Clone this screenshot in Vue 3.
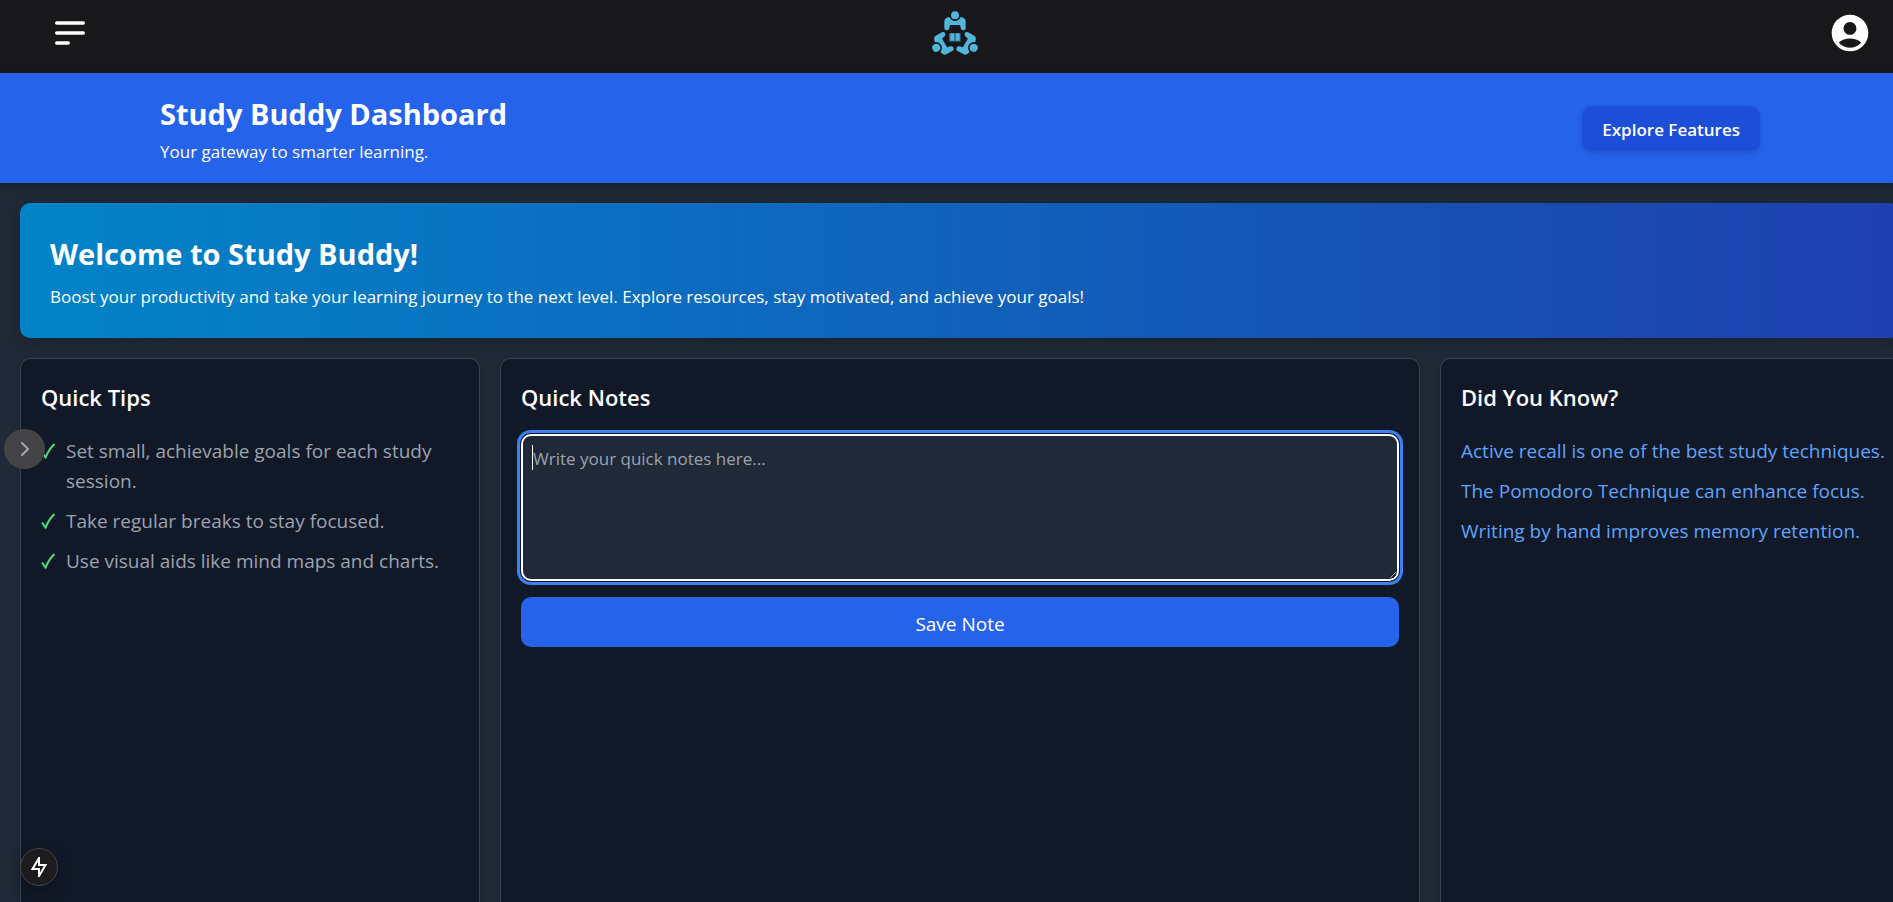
<script setup>
import { onMounted, ref } from 'vue'

const note = ref('')
const noteBox = ref(null)

const tips = [
  'Set small, achievable goals for each study session.',
  'Take regular breaks to stay focused.',
  'Use visual aids like mind maps and charts.',
]

const facts = [
  'Active recall is one of the best study techniques.',
  'The Pomodoro Technique can enhance focus.',
  'Writing by hand improves memory retention.',
]

onMounted(() => noteBox.value.focus())
</script>

<template>
  <div class="page">
    <header class="topbar">
      <button class="icon-button" type="button" aria-label="Menu">
        <svg width="30" height="28" viewBox="0 0 30 28" fill="none" stroke="#fff" stroke-width="3.4" stroke-linecap="round">
          <path d="M1.700 4H28.300M1.700 14H28.300M1.700 24H13.300" />
        </svg>
      </button>
      <svg class="logo" width="48" height="48" viewBox="63 27 144 144" role="img" aria-label="Study Buddy">
        <defs>
          <g id="reader">
            <circle cx="135" cy="46" r="12" />
            <path d="M103 86V64Q103 53 118 51Q124 63 135 63Q146 63 152 51Q167 53 167 64V86Q165 91 160 91Q154 91 153 86L150 75H120L117 86Q116 91 110 91Q105 91 103 86Z" />
          </g>
        </defs>
        <g fill="#52b6dc">
          <use href="#reader" />
          <use href="#reader" transform="rotate(120 135 111)" />
          <use href="#reader" transform="rotate(240 135 111)" />
        </g>
        <path d="M117 100H152V125H117Z" fill="#2b6179" />
        <path d="M121 100H133V122H121ZM137 100H149V122H137Z" fill="#52b6dc" />
      </svg>
      <button class="icon-button" type="button" aria-label="Account">
        <svg width="44" height="44" viewBox="0 0 24 24" fill="#fff">
          <path d="M12 2C6.48 2 2 6.48 2 12s4.48 10 10 10 10-4.48 10-10S17.52 2 12 2zm0 4c1.93 0 3.5 1.57 3.5 3.5S13.93 13 12 13s-3.5-1.57-3.5-3.5S10.07 6 12 6zm0 14c-2.03 0-4.43-.82-6.14-2.88C7.55 15.8 9.68 15 12 15s4.45.8 6.14 2.12C16.43 19.18 14.03 20 12 20z" />
        </svg>
      </button>
    </header>

    <section class="hero">
      <div>
        <h1>Study Buddy Dashboard</h1>
        <p>Your gateway to smarter learning.</p>
      </div>
      <button class="explore" type="button">Explore Features</button>
    </section>

    <main class="content">
      <section class="welcome">
        <h2>Welcome to Study Buddy!</h2>
        <p>Boost your productivity and take your learning journey to the next level. Explore resources, stay motivated, and achieve your goals!</p>
      </section>

      <div class="cards">
        <section class="card">
          <h3>Quick Tips</h3>
          <ul class="tips">
            <li v-for="tip in tips" :key="tip">
              <svg class="check" width="14" height="16" viewBox="0 0 14 16" fill="none" stroke="#4ade80" stroke-width="2">
                <path d="M1 9.500L4.500 14.500Q8 6 13.500 1" />
              </svg>
              <span>{{ tip }}</span>
            </li>
          </ul>
        </section>

        <section class="card">
          <h3><label for="note">Quick Notes</label></h3>
          <div class="field">
            <textarea id="note" ref="noteBox" v-model="note" placeholder="Write your quick notes here..."></textarea>
            <span v-if="!note" class="caret" aria-hidden="true"></span>
          </div>
          <button class="save" type="button">Save Note</button>
        </section>

        <section class="card">
          <h3>Did You Know?</h3>
          <ul class="facts">
            <li v-for="fact in facts" :key="fact">{{ fact }}</li>
          </ul>
        </section>
      </div>
    </main>

    <button class="drawer-toggle" type="button" aria-label="Open panel">
      <svg width="10" height="16" viewBox="0 0 10 16" fill="none" stroke="#a8a8ac" stroke-width="2" stroke-linecap="round" stroke-linejoin="round">
        <path d="M2 2L8 8L2 14" />
      </svg>
    </button>
    <button class="dev-badge" type="button" aria-label="Developer tools">
      <svg width="16" height="20" viewBox="0 0 16 20" fill="none" stroke="#fff" stroke-width="2">
        <path d="M8 1L1.500 12H8V19L14.500 8H8Z" />
      </svg>
    </button>
  </div>
</template>

<style>
body {
  background: #1f2937;
}
</style>

<style scoped>
.page {
  position: relative;
  display: flex;
  flex-direction: column;
  height: 100vh;
  overflow: hidden;
  background: #1f2937;
  color: #fff;
  font-family: "Segoe UI", "Open Sans", "Noto Sans", sans-serif;
}
h1, h2, h3, p, ul {
  margin: 0;
  padding: 0;
}
ul {
  list-style: none;
}
button {
  border: 0;
  color: #fff;
  font-family: inherit;
  cursor: pointer;
}
svg {
  display: block;
}
.topbar {
  display: flex;
  flex: none;
  align-items: center;
  justify-content: space-between;
  box-sizing: border-box;
  height: 73px;
  padding: 0 21px 7px 55px;
  background: #18181a;
}
.logo {
  margin-right: 4px;
}
.icon-button {
  padding: 0;
  background: none;
}
.hero {
  position: relative;
  display: flex;
  flex: none;
  align-items: center;
  justify-content: space-between;
  padding: 20px 133px 20px 160px;
  background: #2563eb;
  box-shadow: 0 4px 10px rgba(0, 0, 0, 0.2);
}
.hero h1,
.welcome h2 {
  font-size: 29px;
  font-weight: 700;
  line-height: 42px;
}
.hero p,
.welcome p {
  font-size: 17px;
  line-height: 22px;
}
.hero p {
  margin-top: 6px;
}
.explore {
  height: 45px;
  padding: 2px 20px 0;
  border-radius: 10px;
  background: #1d4ed8;
  box-shadow: 0 2px 5px rgba(0, 0, 0, 0.15);
  font-size: 17px;
  font-weight: 600;
}
.content {
  display: flex;
  flex: 1;
  flex-direction: column;
  gap: 20px;
  margin: 20px -7px 0 20px;
}
.welcome {
  box-sizing: border-box;
  padding: 30px;
  border-radius: 10px;
  background: linear-gradient(to right, #0284c7, #1e40af);
  box-shadow: 0 4px 15px rgba(0, 0, 0, 0.2);
}
.welcome p {
  margin-top: 11px;
}
.cards {
  display: grid;
  flex: 1;
  grid-template-columns: 1fr 2fr 1fr;
  gap: 20px;
}
.card {
  min-width: 0;
  box-sizing: border-box;
  padding: 20px 20px 40px;
  border: 1px solid #374151;
  border-bottom: 0;
  border-radius: 10px 10px 0 0;
  background: #111827;
  box-shadow: 0 4px 10px rgba(0, 0, 0, 0.15);
}
.card h3 {
  margin-bottom: 19px;
  font-size: 22px;
  font-weight: 600;
  line-height: 36px;
}
.tips,
.facts {
  display: grid;
  gap: 10px;
  margin-top: 21px;
  font-size: 19px;
  line-height: 30px;
}
.tips {
  color: #9ca3af;
}
.tips li {
  display: flex;
  gap: 11px;
}
.check {
  flex: none;
  margin-top: 7px;
}
.facts {
  color: #60a5fa;
  white-space: nowrap;
}
.field {
  position: relative;
}
textarea {
  display: block;
  box-sizing: border-box;
  width: 100%;
  height: 147px;
  padding: 10px;
  border: 2px solid #fff;
  border-radius: 10px;
  outline: 0;
  background: #1f2937;
  box-shadow: 0 0 0 1px #111827, 0 0 0 4px #3b82f6;
  color: #fff;
  font-family: inherit;
  font-size: 17px;
  line-height: 26px;
}
textarea::placeholder {
  color: #9ca3af;
}
.caret {
  position: absolute;
  top: 11px;
  left: 11px;
  width: 1px;
  height: 25px;
  background: #fff;
}
.save {
  display: block;
  width: 100%;
  height: 50px;
  margin-top: 16px;
  padding: 3px 0 0;
  border-radius: 10px;
  background: #2563eb;
  font-size: 19px;
}
.drawer-toggle,
.dev-badge {
  position: absolute;
  display: flex;
  align-items: center;
  justify-content: center;
  box-sizing: border-box;
  padding: 0;
  border-radius: 50%;
}
.drawer-toggle {
  top: 429px;
  left: 4px;
  width: 41px;
  height: 40px;
  background: #444446;
}
.dev-badge {
  bottom: 16px;
  left: 20px;
  width: 38px;
  height: 38px;
  border: 1px solid #454547;
  background: #1c1c1e;
  box-shadow: 0 6px 14px rgba(0, 0, 0, 0.25);
}
</style>
